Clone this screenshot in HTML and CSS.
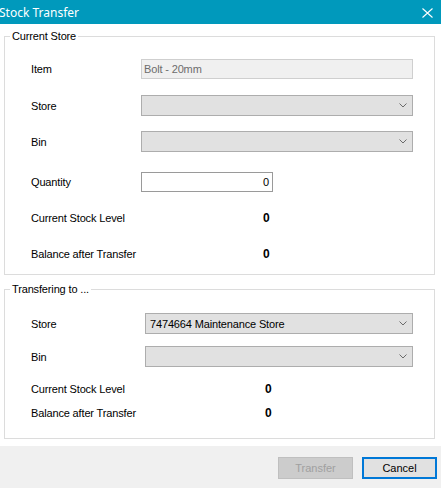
FILE: index.html
```html
<!DOCTYPE html>
<html lang="en">
<head>
    <meta charset="UTF-8">
    <meta name="viewport" content="width=device-width, initial-scale=1.0">
    <title>Stock Transfer</title>
    <link rel="stylesheet" href="styles.css">
</head>
<body>

    <div class="dialog">
        <!-- Window caption -->
        <div class="titlebar">
            <span class="title">Stock Transfer</span>
            <svg class="close-icon" width="11" height="10" viewBox="0 0 11 10">
                <path d="M0.5 0.5 L10.5 9.5 M10.5 0.5 L0.5 9.5" stroke="#fff" stroke-width="1.1" fill="none"/>
            </svg>
        </div>

        <div class="dialog-body">
            <!-- Where the stock is coming from -->
            <fieldset class="group current-store">
                <legend>Current Store</legend>
                <div class="group-rows">
                    <div class="row row-item">
                        <span class="label">Item</span>
                        <div class="textbox textbox-readonly field-wide">Bolt - 20mm</div>
                    </div>
                    <div class="row row-store">
                        <span class="label">Store</span>
                        <div class="combo field-wide">
                            <span class="combo-text"></span>
                            <svg class="chevron" width="8" height="5" viewBox="0 0 8 5"><polyline points="0.5,0.5 4,4 7.5,0.5" fill="none" stroke="#6b6b6b" stroke-width="1"/></svg>
                        </div>
                    </div>
                    <div class="row">
                        <span class="label">Bin</span>
                        <div class="combo field-wide">
                            <span class="combo-text"></span>
                            <svg class="chevron" width="8" height="5" viewBox="0 0 8 5"><polyline points="0.5,0.5 4,4 7.5,0.5" fill="none" stroke="#6b6b6b" stroke-width="1"/></svg>
                        </div>
                    </div>
                    <div class="row row-qty">
                        <span class="label">Quantity</span>
                        <div class="textbox textbox-number">0</div>
                    </div>
                    <div class="row">
                        <span class="label label-stat">Current Stock Level</span>
                        <span class="stat-value">0</span>
                    </div>
                    <div class="row">
                        <span class="label label-stat">Balance after Transfer</span>
                        <span class="stat-value">0</span>
                    </div>
                </div>
            </fieldset>

            <!-- Where the stock is going -->
            <fieldset class="group transfer-to">
                <legend>Transfering to ...</legend>
                <div class="group-rows">
                    <div class="row row-store">
                        <span class="label">Store</span>
                        <div class="combo field-wide">
                            <span class="combo-text">7474664 Maintenance Store</span>
                            <svg class="chevron" width="8" height="5" viewBox="0 0 8 5"><polyline points="0.5,0.5 4,4 7.5,0.5" fill="none" stroke="#6b6b6b" stroke-width="1"/></svg>
                        </div>
                    </div>
                    <div class="row row-bin">
                        <span class="label">Bin</span>
                        <div class="combo field-wide">
                            <span class="combo-text"></span>
                            <svg class="chevron" width="8" height="5" viewBox="0 0 8 5"><polyline points="0.5,0.5 4,4 7.5,0.5" fill="none" stroke="#6b6b6b" stroke-width="1"/></svg>
                        </div>
                    </div>
                    <div class="row row-stat row-stock">
                        <span class="label label-stat">Current Stock Level</span>
                        <span class="stat-value">0</span>
                    </div>
                    <div class="row row-stat row-balance">
                        <span class="label label-stat">Balance after Transfer</span>
                        <span class="stat-value">0</span>
                    </div>
                </div>
            </fieldset>
        </div>

        <!-- Dialog buttons -->
        <div class="button-bar">
            <button class="btn" disabled>Transfer</button>
            <button class="btn btn-default">Cancel</button>
        </div>
    </div>

</body>
</html>
```

FILE: styles.css
```css
* {
    box-sizing: border-box;
}

body {
    margin: 0;
    padding: 0;
    font-family: 'Liberation Sans', Arial, sans-serif;
    font-size: 11px;
    letter-spacing: -0.15px;
    color: #000;
    background-color: #fff;
}

.dialog {
    width: 441px;
    height: 488px;
    display: flex;
    flex-direction: column;
    background-color: #fff;
}

/* Caption bar */
.titlebar {
    height: 24px;
    flex-shrink: 0;
    display: flex;
    align-items: center;
    justify-content: space-between;
    padding-right: 8px;
    background-color: #0099bc;
    color: #fff;
}

.title {
    font-family: 'Noto Sans', sans-serif;
    font-size: 12px;
    letter-spacing: 0;
    margin-left: -1px;
}

.close-icon {
    display: block;
    margin-top: 1px;
}

.dialog-body {
    flex: 1;
    padding: 6px 6px 0 4px;
}

/* Group boxes */
.group {
    margin: 0;
    padding: 0;
    min-width: 0;
    border: 1px solid #dcdcdc;
}

.group legend {
    margin-left: 5px;
    padding: 0 2px;
    line-height: 13px;
}

.group-rows {
    padding: 0 0 10px 26px;
}

.transfer-to {
    margin-top: 8px;
}

.transfer-to .group-rows {
    padding-bottom: 18px;
}

.row {
    display: flex;
    align-items: center;
    height: 21px;
    margin-top: 15px;
}

.row-store {
    margin-top: 16px;
}

.row-qty {
    margin-top: 19px;
}

.transfer-to .row-store {
    margin-top: 17px;
}

.transfer-to .row-bin {
    margin-top: 12px;
}

.transfer-to .row-stat {
    height: 15px;
}

.transfer-to .row-stock {
    margin-top: 14px;
}

.transfer-to .row-balance {
    margin-top: 9px;
}

.label {
    width: 110px;
    flex-shrink: 0;
}

.transfer-to .label {
    width: 114px;
}

.label-stat {
    width: 232px;
}

.transfer-to .label-stat {
    width: 234px;
}

.stat-value {
    font-weight: bold;
    font-size: 12px;
}

/* Inputs */
.field-wide {
    width: 272px;
}

.transfer-to .field-wide {
    width: 268px;
}

.textbox {
    height: 20px;
    line-height: 18px;
    padding: 0 3px;
    border: 1px solid #7a7a7a;
    background-color: #fff;
    white-space: nowrap;
}

.textbox-readonly {
    border-color: #cfcfcf;
    background-color: #f0f0f0;
    color: #6d6d6d;
    padding-left: 2px;
}

.textbox-number {
    width: 132px;
    height: 20px;
    text-align: right;
    border-color: #9a9a9a;
}

.combo {
    height: 21px;
    display: flex;
    align-items: center;
    justify-content: space-between;
    padding: 0 5px 0 4px;
    border: 1px solid #adadad;
    background-color: #e1e1e1;
}

.chevron {
    display: block;
}

/* Bottom button strip */
.button-bar {
    height: 42px;
    flex-shrink: 0;
    display: flex;
    justify-content: flex-end;
    gap: 9px;
    padding: 11px 4px 0 0;
    background-color: #f0f0f0;
}

.btn {
    width: 75px;
    height: 22px;
    padding: 0;
    font-family: 'Liberation Sans', Arial, sans-serif;
    font-size: 11px;
    color: #000;
    background-color: #e1e1e1;
    border: 1px solid #adadad;
    border-radius: 0;
}

.btn:disabled {
    color: #a0a0a0;
    background-color: #cccccc;
    border-color: #bfbfbf;
}

.btn-default {
    border: 2px solid #0078d7;
}
```
